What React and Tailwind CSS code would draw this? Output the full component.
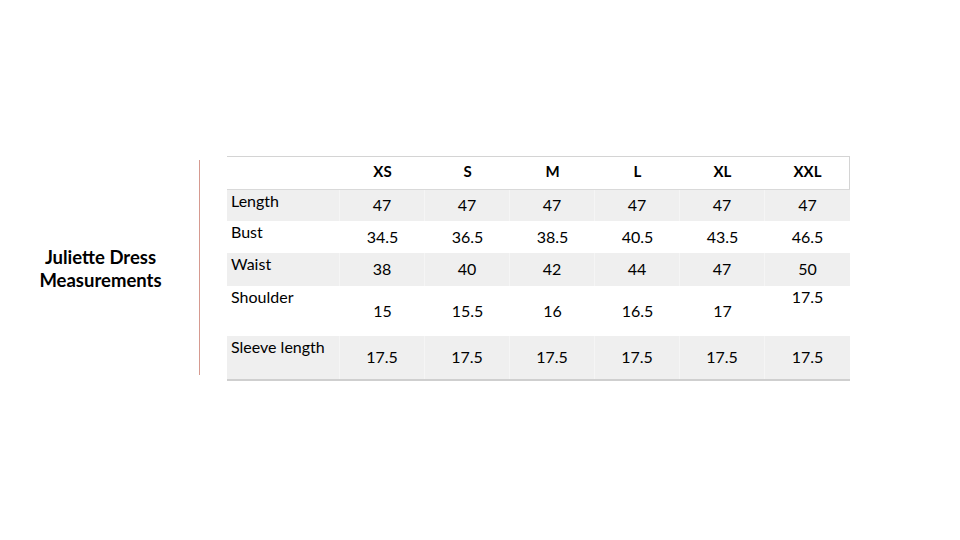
import React from "react";

const sizes = ["XS", "S", "M", "L", "XL", "XXL"];
const rows = [
  { label: "Length", vals: ["47", "47", "47", "47", "47", "47"], h: "h-[32px]", gray: true },
  { label: "Bust", vals: ["34.5", "36.5", "38.5", "40.5", "43.5", "46.5"], h: "h-[32px]", gray: false },
  { label: "Waist", vals: ["38", "40", "42", "44", "47", "50"], h: "h-[33px]", gray: true },
  { label: "Shoulder", vals: ["15", "15.5", "16", "16.5", "17", "17.5"], h: "h-[50px]", gray: false, lastTop: true },
  { label: "Sleeve length", vals: ["17.5", "17.5", "17.5", "17.5", "17.5", "17.5"], h: "h-[45px]", gray: true },
];

export default function App() {
  return (
    <div
      className="w-[960px] h-[540px] bg-white text-black overflow-hidden"
      style={{ fontFamily: "Lato, 'Open Sans', 'Liberation Sans', sans-serif" }}
    >
      <div className="flex pt-[156px]">
        <div className="w-[199px] h-[225px] flex items-center justify-center">
          <div className="text-center font-bold text-[18.5px] leading-[23px] pl-[2px]">
            Juliette Dress
            <br />
            Measurements
          </div>
        </div>
        <div className="w-px h-[215px] mt-[4px] bg-[#d69a90]" />
        <div className="ml-[27px] w-[623px] flex flex-col">
          <div className="grid grid-cols-[113px_repeat(6,85px)] h-[33px] pb-[3px] border-t border-r border-[#d4d4d4] items-center">
            <div />
            {sizes.map((s) => (
              <div key={s} className="text-center font-bold text-[15px]">
                {s}
              </div>
            ))}
          </div>
          {rows.map((r, i) => (
            <div
              key={r.label}
              className={`grid grid-cols-[113px_repeat(6,85px)] ${r.h} ${r.gray ? "bg-[#efefef]" : "bg-white"} ${i === rows.length - 1 ? "border-b-2 border-[#cfcfcf]" : ""} ${i === 0 ? "border-t border-[#d9d9d9]" : ""}`}
            >
              <div className={`pl-[4px] pt-[1px] text-[16px] leading-[20px] ${r.gray ? "border-r border-[#f5f5f5]" : ""}`}>
                {r.label}
              </div>
              {r.vals.map((v, j) => (
                <div
                  key={j}
                  className={`flex justify-center text-[16px] leading-[20px] ${r.lastTop && j === 5 ? "items-start pt-[1px]" : "items-center pb-[1px]"} ${r.gray && j < 5 ? "border-r border-[#f5f5f5]" : ""}`}
                >
                  {v}
                </div>
              ))}
            </div>
          ))}
        </div>
      </div>
    </div>
  );
}
